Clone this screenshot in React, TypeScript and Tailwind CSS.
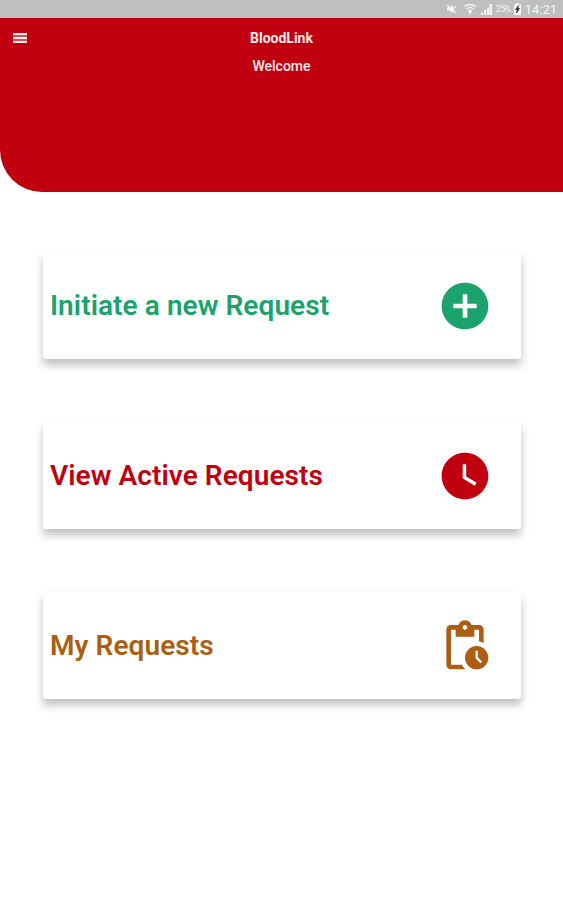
import type { IconType } from "react-icons"
import { MdAddCircle, MdOutlinePendingActions, MdWatchLater } from "react-icons/md"
import { clsx } from "clsx"

type Action = {
  label: string
  icon: IconType
  color: string
}

const actions: Action[] = [
  { label: "Initiate a new Request", icon: MdAddCircle, color: "text-[#1aa36c]" },
  { label: "View Active Requests", icon: MdWatchLater, color: "text-[#c1000f]" },
  { label: "My Requests", icon: MdOutlinePendingActions, color: "text-[#ac5e12]" },
]

function StatusBar() {
  return (
    <div className="flex h-[18px] items-center justify-end bg-[#bfbfbf] pr-[6px] text-[#f4f4f4]">
      <svg className="mr-[7px] h-[10px] w-[11px]" viewBox="0 0 11 10" fill="currentColor">
        <path d="M1 3.5h2.5L7 1v8L3.5 6.5H1z" />
        <path d="M1 1l9 8M10 2L7 5" stroke="currentColor" strokeWidth="1.2" />
      </svg>
      <svg className="mr-[5px] h-[12px] w-[12px]" viewBox="0 0 12 12" fill="none" stroke="currentColor">
        <path d="M.5 3.7Q6-.8 11.5 3.7M2.5 6Q6 3 9.5 6" strokeWidth="1.5" />
        <path d="M3.5 7.5Q6 6 8.5 7.5L6 11.5z" fill="currentColor" stroke="none" />
      </svg>
      <svg className="mr-[4px] h-[11px] w-[11px]" viewBox="0 0 11 11" fill="currentColor">
        <path d="M0 11V8.5h2V11zM3 11V6h2v5zM6 11V3.5h2V11zM8.5 11V0H11v11z" />
      </svg>
      <span className="mr-[3px] text-[9px] leading-none tracking-[-0.6px]">25%</span>
      <svg className="mr-[4px] h-[12px] w-[7px]" viewBox="0 0 7 12">
        <path d="M2 0h3v1.5h2V12H0V1.5h2z" fill="currentColor" />
        <path d="M4.5 2.5L1.5 6.5h1.7L2.5 10l3-4.5H3.8z" fill="#222" stroke="#222" strokeWidth=".6" />
      </svg>
      <span className="text-[13px] leading-none">14:21</span>
    </div>
  )
}

function Header() {
  return (
    <header className="h-[174px] rounded-bl-[42px] bg-[#c1000f] text-[#fbe9e7]">
      <div className="grid grid-cols-3 items-center pt-[10px]">
        <button className="ml-[13px] w-[14px]" aria-label="Menu">
          <svg className="h-[10px] w-[14px]" viewBox="0 0 14 10" fill="currentColor">
            <path d="M0 0h14v10H0z" opacity=".35" />
            <path d="M0 0h14v2H0zM0 4h14v2H0zM0 8h14v2H0z" />
          </svg>
        </button>
        <h1 className="text-center text-sm leading-5 font-bold">BloodLink</h1>
      </div>
      <p className="mt-2 text-center text-sm leading-5 font-medium">Welcome</p>
    </header>
  )
}

function ActionCard({ label, icon: Icon, color }: Action) {
  return (
    <button
      className={clsx(
        "flex h-[107px] w-full items-center justify-between rounded-[3px] bg-white pr-[28.5px] pl-[7px] shadow-[0_6px_8px_rgba(0,0,0,0.25)]",
        color,
      )}
    >
      <span className="text-[28px] leading-8 font-semibold tracking-[0.07px]">{label}</span>
      <Icon className="size-14" />
    </button>
  )
}

export default function App() {
  return (
    <div className="min-h-[900px] bg-white font-['Roboto',sans-serif]">
      <StatusBar />
      <Header />
      <main className="flex flex-col gap-[63px] pt-[60px] pr-[42px] pl-[43px]">
        {actions.map((action) => (
          <ActionCard key={action.label} {...action} />
        ))}
      </main>
    </div>
  )
}
